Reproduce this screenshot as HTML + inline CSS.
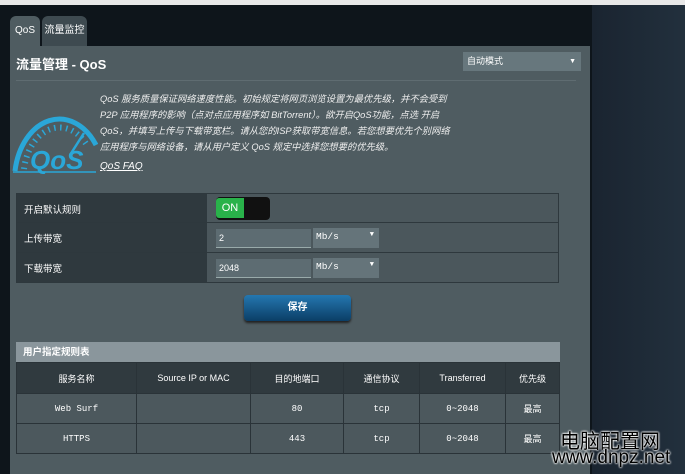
<!DOCTYPE html><html><head><meta charset="utf-8"><style>
*{margin:0;padding:0;box-sizing:border-box}
body{width:685px;height:474px;overflow:hidden;background:#0e151b;font-family:"Liberation Sans","Noto Sans CJK SC",sans-serif;position:relative;color:#fff}
.abs{position:absolute}
.top{left:0;top:0;width:685px;height:5px;background:#e8e8e8}
.right{left:592px;top:5px;width:93px;height:469px;background:linear-gradient(90deg,#1a2430,#22303d)}
.tab{top:16px;height:30px;background:#3e4a50;border-radius:6px 6px 0 0;font-size:10px;line-height:30px;text-align:center;white-space:nowrap}
.panel{left:10px;top:46px;width:580px;height:428px;background:#4f5c61}
.title{left:16px;top:54px;font-size:13px;font-weight:bold}
.sel{left:463px;top:52px;width:118px;height:19px;background:#67777d;font-size:9px;line-height:19px;padding-left:4px}
.hr{left:16px;top:80px;width:560px;height:1px;background:#5f6c71}
.desc{left:100px;top:91px;font-size:9.3px;line-height:16px;font-style:italic;color:#eee;white-space:nowrap}
.faq{left:100px;top:161px;font-size:10px;text-decoration:underline;font-style:italic}
.row{left:16px;width:543px;background:#4b575c;border:1px solid #2e383d}
.lab{position:absolute;left:0;top:0;width:190px;height:100%;background:#2f393e;font-size:9.5px;padding:8px 7px}
.inp{position:absolute;left:199px;top:6px;width:95px;height:19px;background:#5d6c72;border-bottom:1px solid #9aa;font-size:9px;line-height:19px;padding-left:3px}
.dd{position:absolute;left:296px;top:5px;width:66px;height:20px;background:#65747a;font-family:"Liberation Mono",monospace;font-size:9.5px;padding:3px 3px}
.btn{left:244px;top:295px;width:107px;height:26px;border-radius:4px;background:linear-gradient(#2477b0,#0b3e66);font-size:10px;font-weight:bold;text-align:center;line-height:26px;box-shadow:0 2px 2px #222}
table{position:absolute;left:16px;top:362px;width:544px;border-collapse:collapse;font-size:9px}
td{border:1px solid #2a3338;text-align:center;height:30px}
tr.h td{background:#303a3f;height:31px}
tr.d td{background:#4c585d;font-family:"Liberation Mono",monospace;font-size:9px}
.wm1{left:560px;top:425px;font-size:20px;color:#000;text-shadow:0 0 2px #fff,0 0 2px #fff,0 0 2px #fff}
.wm2{left:552px;top:447px;font-size:19px;color:#000;text-shadow:0 0 2px #fff,0 0 2px #fff,0 0 2px #fff}
</style></head><body>
<div class="abs top"></div>
<div class="abs right"></div>
<div class="abs panel"></div>
<div class="abs tab" style="left:10px;width:30px;background:#4f5c61">QoS</div>
<div class="abs tab" style="left:42px;width:45px">流量监控</div>
<div class="abs title">流量管理 - QoS</div>
<div class="abs sel">自动模式<span style="position:absolute;right:5px;font-size:7px">▼</span></div>
<div class="abs hr"></div>
<svg class="abs" style="left:12px;top:105px" width="86" height="70" viewBox="0 0 86 70">
<path d="M3 66 A45 62 0 0 1 84 40" fill="none" stroke="#2aa7d8" stroke-width="5"/>
<path d="M12 64 A36 50 0 0 1 76 42" fill="none" stroke="#2aa7d8" stroke-width="6" stroke-dasharray="1.5 4.5"/>
<line x1="58" y1="50" x2="72" y2="28" stroke="#2aa7d8" stroke-width="2.5"/>
<line x1="1" y1="67" x2="84" y2="67" stroke="#2aa7d8" stroke-width="1.5"/>
<text x="18" y="64" font-family="Liberation Sans" font-weight="bold" font-style="italic" font-size="26" fill="#2aa7d8">QoS</text>
</svg>
<div class="abs desc">QoS 服务质量保证网络速度性能。初始规定将网页浏览设置为最优先级，并不会受到<br>P2P 应用程序的影响（点对点应用程序如 BitTorrent）。欲开启QoS功能，点选 开启<br>QoS，并填写上传与下载带宽栏。请从您的ISP获取带宽信息。若您想要优先个别网络<br>应用程序与网络设备，请从用户定义 QoS 规定中选择您想要的优先级。</div>
<div class="abs faq">QoS FAQ</div>
<div class="abs row" style="top:193px;height:30px"><div class="lab">开启默认规则</div>
<div style="position:absolute;left:199px;top:3px;width:54px;height:23px;background:#111;border-radius:4px"></div>
<div style="position:absolute;left:199px;top:4px;width:28px;height:20px;background:#29b24a;font-size:11px;line-height:20px;text-align:center;border-radius:3px 0 0 3px">ON</div></div>
<div class="abs row" style="top:222px;height:31px"><div class="lab">上传带宽</div><div class="inp">2</div><div class="dd">Mb/s<span style="position:absolute;right:5px;font-size:7px">▼</span></div></div>
<div class="abs row" style="top:252px;height:31px"><div class="lab">下载带宽</div><div class="inp">2048</div><div class="dd">Mb/s<span style="position:absolute;right:5px;font-size:7px">▼</span></div></div>
<div class="abs btn">保存</div>
<div class="abs" style="left:16px;top:342px;width:544px;height:21px;background:#8a969c;font-size:9.5px;font-weight:bold;line-height:21px;padding-left:7px">用户指定规则表</div>
<table>
<tr class="h"><td style="width:120px">服务名称</td><td style="width:114px">Source IP or MAC</td><td style="width:93px">目的地端口</td><td style="width:76px">通信协议</td><td style="width:86px">Transferred</td><td>优先级</td></tr>
<tr class="d"><td>Web Surf</td><td></td><td>80</td><td>tcp</td><td>0~2048</td><td>最高</td></tr>
<tr class="d"><td>HTTPS</td><td></td><td>443</td><td>tcp</td><td>0~2048</td><td>最高</td></tr>
</table>
<div class="abs wm1">电脑配置网</div>
<div class="abs wm2">www.dnpz.net</div>
</body></html>
